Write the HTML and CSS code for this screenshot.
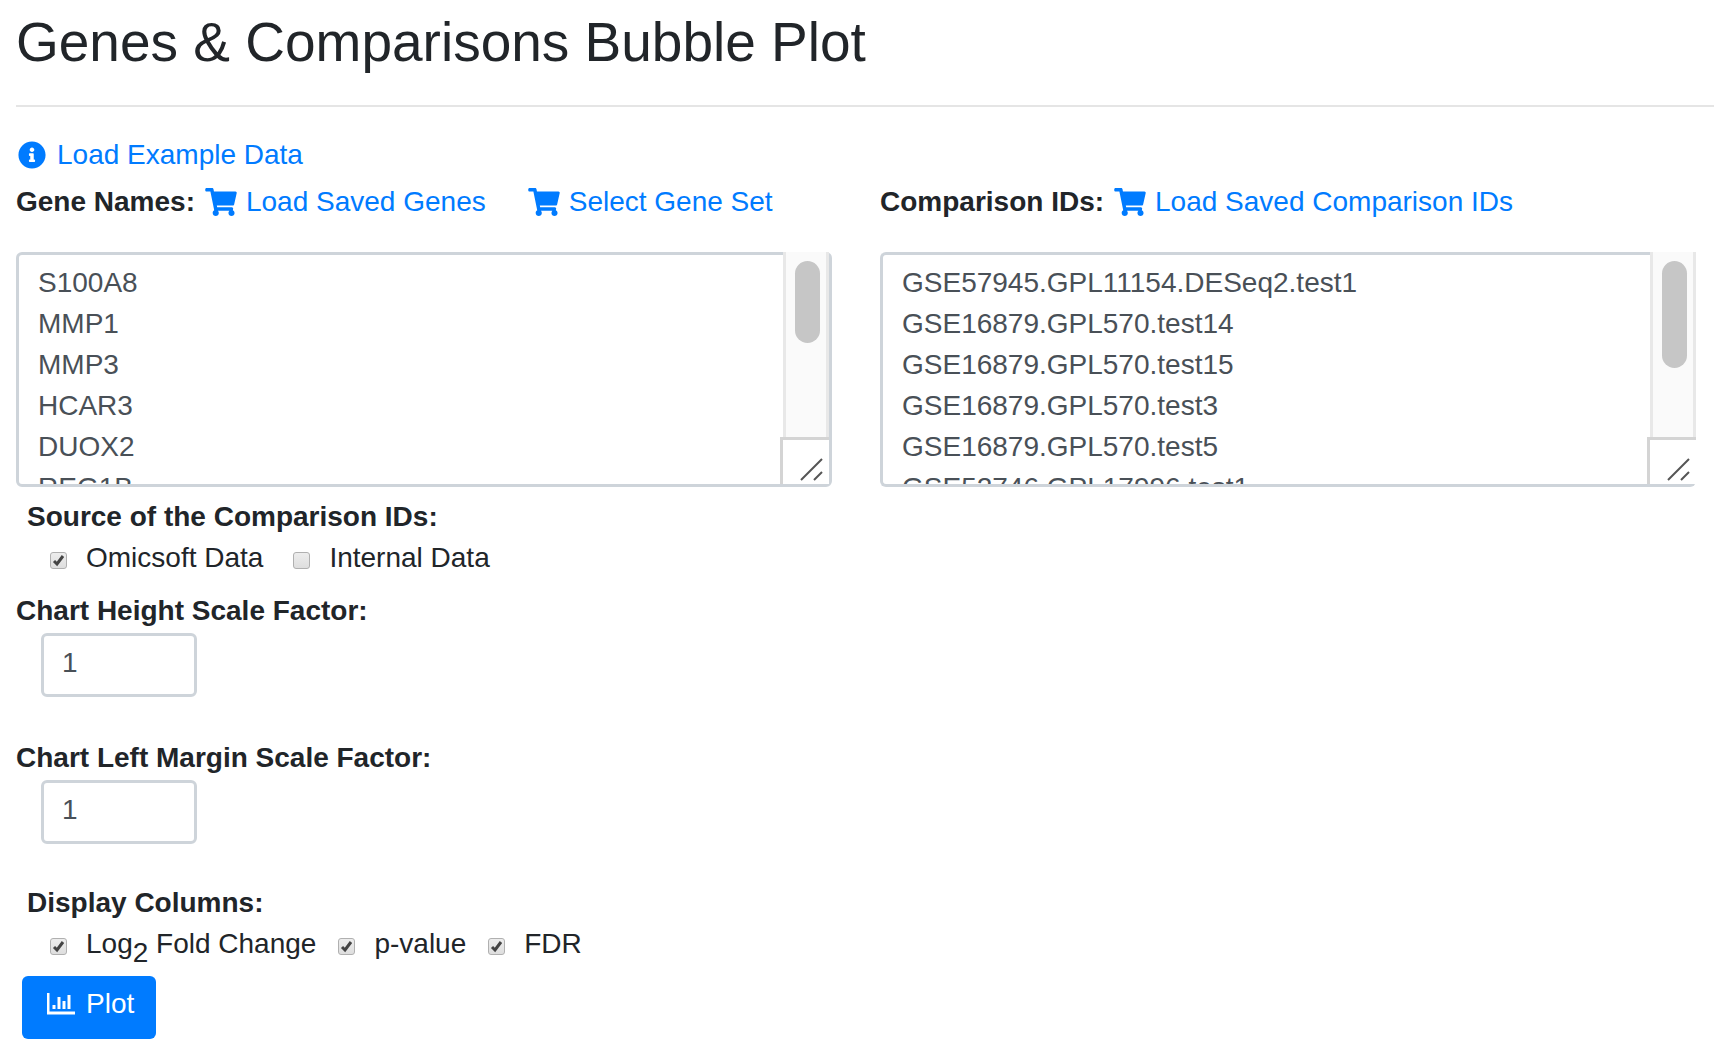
FILE: index.html
```html
<!DOCTYPE html>
<html lang="en">
<head>
<meta charset="utf-8">
<title>Genes &amp; Comparisons Bubble Plot</title>
<link rel="stylesheet" href="styles.css">
</head>
<body>
<svg class="sprite" aria-hidden="true">
  <symbol id="cart" viewBox="0 0 576 512"><path d="M528.12 301.319l47.273-208C578.806 78.301 567.391 64 551.99 64H159.208l-9.166-44.81C147.758 8.021 137.93 0 126.529 0H24C10.745 0 0 10.745 0 24v16c0 13.255 10.745 24 24 24h69.883l70.248 343.435C147.325 417.1 136 435.222 136 456c0 30.928 25.072 56 56 56s56-25.072 56-56c0-15.674-6.447-29.835-16.824-40h209.647C430.447 426.165 424 440.326 424 456c0 30.928 25.072 56 56 56s56-25.072 56-56c0-22.172-12.888-41.332-31.579-50.405l5.517-24.276c3.413-15.018-8.002-29.319-23.403-29.319H218.117l-6.545-32h293.145c11.206 0 20.92-7.754 23.403-18.681z"/></symbol>
  <symbol id="grip" viewBox="0 0 24 24"><path d="M1 22L22 1M14 22l8-8" fill="none" stroke="#555" stroke-width="2"/></symbol>
</svg>
<main class="page">
  <h1 class="title">Genes &amp; Comparisons Bubble Plot</h1>
  <hr class="rule">
  <form class="form">
    <div class="line">
      <a class="link" href="#"><svg class="icon icon-info" viewBox="0 0 512 512"><path d="M256 8C119.043 8 8 119.083 8 256c0 136.997 111.043 248 248 248s248-111.003 248-248C504 119.083 392.957 8 256 8zm0 110c23.196 0 42 18.804 42 42s-18.804 42-42 42-42-18.804-42-42 18.804-42 42-42zm56 254c0 6.627-5.373 12-12 12h-88c-6.627 0-12-5.373-12-12v-24c0-6.627 5.373-12 12-12h12v-64h-12c-6.627 0-12-5.373-12-12v-24c0-6.627 5.373-12 12-12h64c6.627 0 12 5.373 12 12v100h12c6.627 0 12 5.373 12 12v24z"/></svg>Load Example Data</a>
    </div>
    <div class="columns">
      <div class="field">
        <div class="line">
          <label class="label" for="genes">Gene Names:</label>
          <a class="link" href="#"><svg class="icon icon-cart"><use href="#cart"/></svg>Load Saved Genes</a>
          <a class="link link-second" href="#"><svg class="icon icon-cart"><use href="#cart"/></svg>Select Gene Set</a>
        </div>
        <div class="list-wrap list-wrap-framed">
          <textarea class="list" id="genes">S100A8
MMP1
MMP3
HCAR3
DUOX2
REG1B</textarea>
          <div class="scrollbar"><div class="thumb thumb-short"></div></div>
          <div class="corner"><svg class="grip"><use href="#grip"/></svg></div>
        </div>
      </div>
      <div class="field">
        <div class="line">
          <label class="label" for="comparisons">Comparison IDs:</label>
          <a class="link" href="#"><svg class="icon icon-cart"><use href="#cart"/></svg>Load Saved Comparison IDs</a>
        </div>
        <div class="list-wrap">
          <textarea class="list list-open" id="comparisons">GSE57945.GPL11154.DESeq2.test1
GSE16879.GPL570.test14
GSE16879.GPL570.test15
GSE16879.GPL570.test3
GSE16879.GPL570.test5
GSE52746.GPL17996.test1</textarea>
          <div class="scrollbar"><div class="thumb thumb-long"></div></div>
          <div class="corner"><svg class="grip"><use href="#grip"/></svg></div>
        </div>
      </div>
    </div>
    <fieldset class="group">
      <legend class="label">Source of the Comparison IDs:</legend>
      <div class="checks">
        <label class="check"><input class="box" type="checkbox" checked>Omicsoft Data</label>
        <label class="check"><input class="box" type="checkbox">Internal Data</label>
      </div>
    </fieldset>
    <div class="scale">
      <label class="label" for="height">Chart Height Scale Factor:</label>
      <input class="number" id="height" type="text" value="1">
    </div>
    <div class="scale">
      <label class="label" for="margin">Chart Left Margin Scale Factor:</label>
      <input class="number" id="margin" type="text" value="1">
    </div>
    <fieldset class="group">
      <legend class="label">Display Columns:</legend>
      <div class="checks checks-tight">
        <label class="check"><input class="box" type="checkbox" checked><span>Log<sub class="sub">2</sub> Fold Change</span></label>
        <label class="check"><input class="box" type="checkbox" checked>p-value</label>
        <label class="check"><input class="box" type="checkbox" checked>FDR</label>
      </div>
    </fieldset>
    <button class="plot" type="button"><svg class="icon icon-chart" viewBox="0 0 28 24"><path d="M1 1v20h27M7 17v-4M12 17V5M17 17v-8M22 17V3"/></svg>Plot</button>
  </form>
</main>
</body>
</html>
```
FILE: styles.css
```css
* { box-sizing: border-box; }

body {
  margin: 0;
  background: #fff;
  color: #212529;
  font: 28px/42px "Liberation Sans", Arial, sans-serif;
}

.sprite { display: none; }

.page { padding: 9px 0 16px 16px; }

.title {
  margin: 0;
  font-size: 55px;
  line-height: 66px;
  font-weight: 400;
}

.rule {
  height: 2px;
  margin: 30px 0 27px;
  border: 0;
  background: #e5e5e5;
}

.form { padding-right: 18px; }

.line {
  display: flex;
  align-items: center;
  gap: 10px;
}

.label { font-weight: 700; }

.link {
  display: flex;
  align-items: center;
  gap: 9px;
  color: #007bff;
  text-decoration: none;
}
.link-second { margin-left: 32px; }

.icon {
  flex: none;
  height: 28px;
  fill: currentColor;
}
.icon-info { width: 28px; margin: 0 2px 0 2px; }
.icon-cart { width: 32px; }

.columns {
  display: grid;
  grid-template-columns: 1fr 1fr;
  gap: 48px;
  margin-top: 5px;
}

/* List boxes, with the scrollbar and the resize corner laid over the frame */
.list-wrap {
  --bar-right: 0px;
  position: relative;
  margin-top: 29px;
}
.list-wrap-framed { --bar-right: 3px; }

.list {
  display: block;
  width: 100%;
  height: 235px;
  padding: 7px 60px 0 19px;
  border: 3px solid #ced4da;
  border-radius: 6px;
  background: #fff;
  color: #495057;
  font: inherit;
  line-height: 41px;
  resize: none;
  overflow: hidden;
}
.list-open { border-right: 0; }

.scrollbar {
  position: absolute;
  top: 0;
  right: var(--bar-right);
  width: 46px;
  height: 185px;
  padding: 9px 6px 0 9px;
  border: solid #e8e8e8;
  border-width: 0 3px;
  background: #fafafa;
}
.thumb {
  width: 25px;
  border-radius: 13px;
  background: #c6c6c6;
}
.thumb-short { height: 82px; }
.thumb-long { height: 107px; }

.corner {
  position: absolute;
  right: var(--bar-right);
  bottom: 3px;
  display: flex;
  align-items: flex-end;
  justify-content: flex-end;
  width: 49px;
  height: 47px;
  padding: 0 5px 2px 0;
  background: linear-gradient(#d4d4d4, #d4d4d4) 0 0 / 46px 3px no-repeat #fff;
  border-left: 3px solid #d4d4d4;
}
.grip { width: 24px; height: 24px; }

.group {
  min-width: 0;
  margin: 9px 0 0;
  padding: 0 0 0 11px;
  border: 0;
}
.group .label { padding: 0; }

.checks {
  display: flex;
  gap: 30px;
  margin-top: -1px;
  padding-left: 23px;
}
.checks-tight { gap: 22px; }

.check {
  display: flex;
  align-items: center;
  gap: 19px;
}

.box {
  appearance: none;
  width: 17px;
  height: 17px;
  margin: 5px 0 0;
  border: 1px solid #b0b0b0;
  border-radius: 3px;
  background: linear-gradient(#ededed, #dedede);
}
.box:checked {
  background: url("data:image/svg+xml,%3Csvg xmlns='http://www.w3.org/2000/svg' viewBox='0 0 15 15'%3E%3Cpath d='M3 8l3 3L12 3' fill='none' stroke='%23444' stroke-width='3'/%3E%3C/svg%3E"), linear-gradient(#ededed, #dedede);
}

.sub {
  position: relative;
  top: 9px;
  font-size: inherit;
  line-height: 0;
  vertical-align: baseline;
}

.scale {
  display: flex;
  flex-direction: column;
  align-items: flex-start;
  gap: 1px;
  margin-top: 11px;
  padding-bottom: 29px;
}

.number {
  width: 156px;
  height: 64px;
  margin-left: 25px;
  padding: 0 18px 4px;
  border: 3px solid #ced4da;
  border-radius: 6px;
  background: #fff;
  color: #495057;
  font: inherit;
}

.plot {
  display: flex;
  align-items: center;
  gap: 11px;
  margin: 11px 0 0 6px;
  padding: 7px 22px 14px 25px;
  border: 0;
  border-radius: 6px;
  background: #007bff;
  color: #fff;
  font: inherit;
}
.icon-chart {
  width: 28px;
  height: 24px;
  fill: none;
  stroke: currentColor;
  stroke-width: 3;
}
```
